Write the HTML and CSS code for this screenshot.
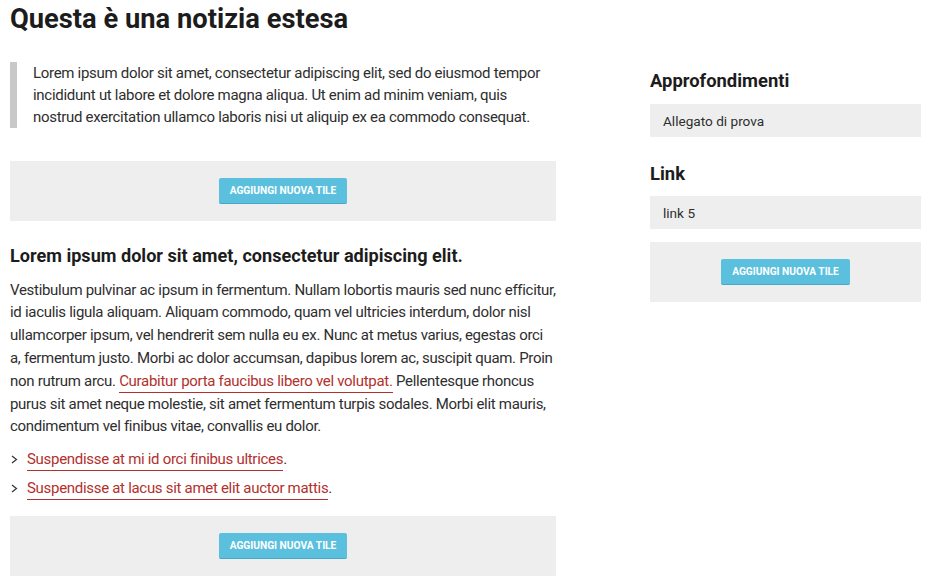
FILE: index.html
```html
<!DOCTYPE html>
<html lang="it">
<head>
<meta charset="utf-8">
<title>Questa è una notizia estesa</title>
<link rel="stylesheet" href="styles.css">
</head>
<body>
<div class="page">
  <h1 class="title">Questa è una notizia estesa</h1>
  <div class="layout">
    <main class="main">
      <blockquote class="lead">Lorem ipsum dolor sit amet, consectetur adipiscing elit, sed do eiusmod tempor incididunt ut labore et dolore magna aliqua. Ut enim ad minim veniam, quis nostrud exercitation ullamco laboris nisi ut aliquip ex ea commodo consequat.</blockquote>
      <div class="tile-box tile-first"><button class="tile-btn">AGGIUNGI NUOVA TILE</button></div>
      <h3 class="sub">Lorem ipsum dolor sit amet, consectetur adipiscing elit.</h3>
      <p class="body-text">Vestibulum pulvinar ac ipsum in fermentum. Nullam lobortis mauris sed nunc efficitur, id iaculis ligula aliquam. Aliquam commodo, quam vel ultricies interdum, dolor nisl ullamcorper ipsum, vel hendrerit sem nulla eu ex. Nunc at metus varius, egestas orci a, fermentum justo. Morbi ac dolor accumsan, dapibus lorem ac, suscipit quam. Proin non rutrum arcu. <a class="link" href="#">Curabitur porta faucibus libero vel volutpat.</a> Pellentesque rhoncus purus sit amet neque molestie, sit amet fermentum turpis sodales. Morbi elit mauris, condimentum vel finibus vitae, convallis eu dolor.</p>
      <ul class="links">
        <li><svg class="chev" width="7" height="9" viewBox="0 0 7 9"><polyline points="1,1 5.5,4.5 1,8" fill="none" stroke="#333" stroke-width="1.2"/></svg><a class="link" href="#">Suspendisse at mi id orci finibus ultrices</a>.</li>
        <li><svg class="chev" width="7" height="9" viewBox="0 0 7 9"><polyline points="1,1 5.5,4.5 1,8" fill="none" stroke="#333" stroke-width="1.2"/></svg><a class="link" href="#">Suspendisse at lacus sit amet elit auctor mattis</a>.</li>
      </ul>
      <div class="tile-box tile-last"><button class="tile-btn">AGGIUNGI NUOVA TILE</button></div>
    </main>
    <aside class="side">
      <h4 class="side-title">Approfondimenti</h4>
      <div class="side-item">Allegato di prova</div>
      <h4 class="side-title side-title-next">Link</h4>
      <div class="side-item">link 5</div>
      <div class="tile-box side-tile"><button class="tile-btn">AGGIUNGI NUOVA TILE</button></div>
    </aside>
  </div>
</div>
</body>
</html>
```
FILE: styles.css
```css
* { box-sizing: border-box; }
html, body { margin: 0; padding: 0; background: #fff; }
body {
  font-family: "Roboto", "Open Sans", sans-serif;
  color: #2e2e2e;
}
.page { padding: 2px 8px 0 10px; }
.title {
  margin: 0;
  font-size: 27.3px;
  line-height: 34px;
  font-weight: 700;
  color: #1c1c1c;
}
.layout {
  display: grid;
  grid-template-columns: 546px 271px;
  column-gap: 94px;
}
.main { padding-top: 26px; }
.lead {
  margin: 0;
  border-left: 7px solid #c8c8c8;
  padding: 0 0 0 16px;
  font-size: 15px;
  letter-spacing: -0.3px;
  line-height: 22px;
  color: #2e2e2e;
}
.tile-box {
  background: #eeeeee;
  height: 60px;
  display: flex;
  justify-content: center;
  align-items: center;
}
.tile-first { margin-top: 33px; }
.tile-last { margin-top: 16px; }
.tile-btn {
  background: #5bc0de;
  border: 0;
  border-bottom: 1px solid #46a8c6;
  border-radius: 2px;
  color: #fff;
  font-family: "Roboto", sans-serif;
  font-weight: 700;
  font-size: 10.2px;
  height: 26px;
  padding: 0 11px;
}
.sub {
  margin: 23px 0 10.5px;
  font-size: 18.1px;
  line-height: 24px;
  font-weight: 700;
  color: #1c1c1c;
}
.body-text {
  margin: 0;
  font-size: 15px;
  letter-spacing: -0.3px;
  line-height: 22.83px;
}
.link {
  color: #b3302c;
  text-decoration: none;
  border-bottom: 1px solid #b3302c;
  padding-bottom: 2px;
}
.links {
  list-style: none;
  margin: 10px 0 0;
  padding: 0;
  font-size: 15px;
  letter-spacing: -0.3px;
  line-height: 22.83px;
}
.links li + li { margin-top: 6px; }
.chev { margin: 0 9px 0 1px; vertical-align: middle; position: relative; top: -1px; }
.side { padding-top: 33px; }
.side-title {
  margin: 0;
  font-size: 18.4px;
  line-height: 24px;
  font-weight: 700;
  color: #1c1c1c;
}
.side-title-next { margin-top: 25px; }
.side-item {
  background: #eeeeee;
  height: 33px;
  margin-top: 11px;
  padding: 0 13px;
  display: flex;
  align-items: center;
  font-size: 13.6px;
  color: #2e2e2e;
}
.side-item + .side-title + .side-item { margin-top: 10px; }
.side-tile { margin-top: 13px; }
```
